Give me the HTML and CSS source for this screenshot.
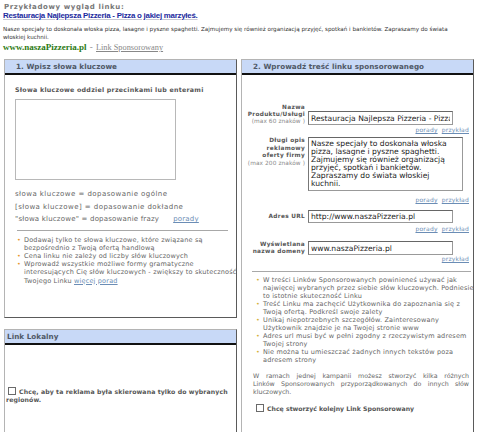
FILE: index.html
```html
<!DOCTYPE html>
<html lang="pl">
<head>
<meta charset="utf-8">
<title>Link Sponsorowany</title>
<link rel="stylesheet" href="styles.css">
</head>
<body>
<div class="sample">
  <div class="sample-label">Przykładowy wygląd linku:</div>
  <div class="sample-title">Restauracja Najlepsza Pizzeria - Pizza o jakiej marzyłeś.</div>
  <div class="sample-desc">Nasze specjały to doskonała włoska pizza, lasagne i pyszne spaghetti. Zajmujemy się również organizacją przyjęć, spotkań i bankietów. Zapraszamy do świata<br>włoskiej kuchnii.</div>
  <div class="sample-url"><b class="sample-domain">www.naszaPizzeria.pl</b> <span class="sample-dash">-</span> <a class="sample-sponsor" href="#">Link Sponsorowany</a></div>
</div>

<div class="panels">
  <div class="col-left">
    <div class="panel panel-keywords">
      <div class="panel-head">1. Wpisz słowa kluczowe</div>
      <div class="kw-body">
        <div class="kw-hint">Słowa kluczowe oddziel przecinkami lub enterami</div>
        <textarea class="kw-input"></textarea>
        <div class="kw-lines">
          <div>słowa kluczowe = dopasowanie ogólne</div>
          <div>[słowa kluczowe] = dopasowanie dokładne</div>
          <div class="kw-phrase">"słowa kluczowe" = dopasowanie frazy<a class="link kw-tip" href="#">porady</a></div>
        </div>
        <div class="rule kw-rule"></div>
        <ul class="tips kw-tips">
          <li><span>Dodawaj tylko te słowa kluczowe, które związane są<br>bezpośrednio z Twoją ofertą handlową</span></li>
          <li><span>Cena linku nie zależy od liczby słów kluczowych</span></li>
          <li><span>Wprowadź wszystkie możliwe formy gramatyczne<br>interesujących Cię słów kluczowych - zwiększy to skuteczność<br>Twojego Linku <a class="link" href="#">więcej porad</a></span></li>
        </ul>
      </div>
    </div>

    <div class="panel panel-local">
      <div class="panel-head head-local">Link Lokalny</div>
      <label class="local-check"><input type="checkbox" class="box box-local">Chcę, aby ta reklama była skierowana tylko do wybranych<br>regionów.</label>
    </div>
  </div>

  <div class="panel panel-ad">
    <div class="panel-head">2. Wprowadź treść linku sponsorowanego</div>

    <div class="frow frow-name">
      <div class="flabel"><b>Nazwa<br>Produktu/Usługi</b><br><span class="fmax">(max 60 znaków )</span></div>
      <input class="finput" type="text" value="Restauracja Najlepsza Pizzeria - Pizza o jakiej marzyłeś.">
    </div>
    <div class="flinks flinks-name"><a class="link" href="#">porady</a> <a class="link" href="#">przykład</a></div>

    <div class="frow frow-desc">
      <div class="flabel"><b>Długi opis<br>reklamowy<br>oferty firmy</b><br><span class="fmax">(max 200 znaków )</span></div>
      <textarea class="fdesc" wrap="off">Nasze specjały to doskonała włoska
pizza, lasagne i pyszne spaghetti.
Zajmujemy się również organizacją
przyjęć, spotkań i bankietów.
Zapraszamy do świata włoskiej
kuchnii.</textarea>
    </div>
    <div class="flinks flinks-desc"><a class="link" href="#">porady</a> <a class="link" href="#">przykład</a></div>

    <div class="frow frow-url">
      <div class="flabel"><b>Adres URL</b></div>
      <input class="finput finput-url" type="text" value="http://www.naszaPizzeria.pl">
    </div>
    <div class="flinks flinks-url"><a class="link" href="#">porady</a> <a class="link" href="#">przykład</a></div>

    <div class="frow frow-domain">
      <div class="flabel"><b>Wyświetlana<br>nazwa domeny</b></div>
      <input class="finput" type="text" value="www.naszaPizzeria.pl">
    </div>
    <div class="flinks"><a class="link" href="#">przykład</a></div>

    <div class="rule ad-rule"></div>
    <ul class="tips ad-tips">
      <li><span>W treści Linków Sponsorowanych powinieneś używać jak<br>najwięcej wybranych przez siebie słów kluczowych. Podniesie<br>to istotnie skuteczność Linku</span></li>
      <li><span>Treść Linku ma zachęcić Użytkownika do zapoznania się z<br>Twoją ofertą. Podkreśl swoje zalety</span></li>
      <li><span>Unikaj niepotrzebnych szczegółów. Zainteresowany<br>Użytkownik znajdzie je na Twojej stronie www</span></li>
      <li><span>Adres url musi być w pełni zgodny z rzeczywistym adresem<br>Twojej strony</span></li>
      <li><span>Nie można tu umieszczać żadnych innych tekstów poza<br>adresem strony</span></li>
    </ul>
    <p class="ad-note"><span class="jline">W ramach jednej kampanii możesz stworzyć kilka różnych</span><span class="jline">Linków Sponsorowanych przyporządkowanych do innych słów</span><span>kluczowych.</span></p>
    <label class="ad-check"><input type="checkbox" class="box">Chcę stworzyć kolejny Link Sponsorowany</label>
  </div>
</div>
</body>
</html>
```

FILE: styles.css
```css
html, body {
  margin: 0;
  padding: 0;
  background: #fff;
}
body {
  font-family: "DejaVu Sans", Verdana, sans-serif;
  color: #555;
  width: 480px;
  height: 435px;
  overflow: hidden;
}

/* ---------- sample link preview ---------- */
.sample {
  padding: 3px 0 0 3px;
  height: 59px;
  box-sizing: border-box;
}
.sample-label {
  font-weight: bold;
  font-size: 7px;
  letter-spacing: 0.6px;
  line-height: 8px;
  color: #777;
  padding-left: 1px;
}
.sample-title {
  font-family: "Liberation Sans", Arial, sans-serif;
  font-weight: bold;
  font-size: 7.9px;
  letter-spacing: -0.25px;
  line-height: 10px;
  color: #1c2a9e;
  text-decoration: underline;
  text-decoration-color: #c8c8d4;
}
.sample-desc {
  margin-top: 4px;
  font-size: 5.6px;
  line-height: 8px;
  color: #333;
  white-space: nowrap;
}
.sample-url {
  margin-top: 1px;
  font-family: "Liberation Serif", "Times New Roman", serif;
  font-size: 9px;
  line-height: 10px;
}
.sample-domain {
  color: #2b7a12;
}
.sample-dash {
  color: #888;
  padding: 0 1px;
}
.sample-sponsor {
  color: #888;
  font-size: 8.3px;
  text-decoration: underline;
}

/* ---------- panels ---------- */
.panels {
  display: grid;
  grid-template-columns: 233px 233px;
  column-gap: 4px;
  padding-left: 4px;
}
.col-left {
  display: flex;
  flex-direction: column;
  gap: 11px;
}
.panel {
  border: 1px solid;
  border-color: #b4b4b4 #5a5a5a #5a5a5a #b4b4b4;
  background: #fff;
  box-sizing: border-box;
}
.panel-head {
  height: 13px;
  background: #c8d9f7;
  border-bottom: 2px solid #111;
  padding-left: 11px;
  font-weight: bold;
  font-size: 7.2px;
  letter-spacing: 0.05px;
  line-height: 13px;
  color: #4f5866;
  white-space: nowrap;
}
.link {
  color: #6b8db5;
  text-decoration: underline;
}

/* panel 1 */
.panel-keywords {
  height: 259px;
}
.kw-body {
  padding-left: 10px;
}
.kw-hint {
  margin-top: 11px;
  font-weight: bold;
  font-size: 6.3px;
  letter-spacing: 0.25px;
  line-height: 8px;
  color: #555;
  white-space: nowrap;
}
.kw-input {
  display: block;
  margin: 5px 0 0 0;
  width: 161px;
  height: 81px;
  box-sizing: border-box;
  border: 1px solid #b8b8b8;
  padding: 0;
  resize: none;
  background: #fff;
}
.kw-lines {
  margin-top: 8px;
  font-size: 7px;
  letter-spacing: 0.45px;
  line-height: 12.5px;
  color: #666;
  white-space: nowrap;
}
.kw-phrase {
  letter-spacing: 0.2px;
}
.kw-tip {
  margin-left: 14px;
}
.rule {
  border-top: 1px solid #a8a8a8;
  height: 0;
}
.kw-rule {
  margin: 4px 8px 0 2px;
}
.tips {
  list-style: none;
  margin: 0;
  padding: 0;
  font-size: 6.5px;
  letter-spacing: 0.18px;
  color: #666;
  white-space: nowrap;
}
.tips li {
  display: flex;
}
.tips li::before {
  content: "•";
  flex: none;
  width: 7px;
  letter-spacing: 0;
  color: #e89a2a;
}
.kw-tips {
  margin: 5px 0 0 2px;
  line-height: 8.2px;
}

/* Link Lokalny */
.panel-local {
  height: 103px;
  border-bottom: none;
}
.head-local {
  padding-left: 2px;
}
.local-check {
  display: block;
  margin-top: 42px;
  padding-left: 1px;
  font-weight: bold;
  font-size: 6.2px;
  letter-spacing: 0.1px;
  line-height: 8px;
  color: #555;
  white-space: nowrap;
}
.box {
  appearance: none;
  -webkit-appearance: none;
  width: 8px;
  height: 8px;
  margin: 0 3px 0 2px;
  padding: 0;
  border: 1px solid #6a6a6a;
  background: #fff;
  box-sizing: border-box;
  vertical-align: -1px;
}

/* panel 2 */
.panel-ad {
  height: 373px;
  border-bottom: none;
}
.frow {
  display: grid;
  grid-template-columns: 63px auto;
  column-gap: 3px;
  align-items: end;
}
.frow-name {
  margin-top: 29px;
}
.flabel {
  text-align: right;
  font-size: 5.8px;
  letter-spacing: 0.3px;
  line-height: 7px;
  color: #555;
  white-space: nowrap;
}
.fmax {
  color: #8a8a8a;
  letter-spacing: 0.1px;
}
.finput {
  width: 145px;
  height: 14px;
  box-sizing: border-box;
  margin: 0;
  padding: 0 2px;
  border: 1px solid #999;
  border-top-color: #666;
  border-left-color: #777;
  font-family: "DejaVu Sans", Verdana, sans-serif;
  font-size: 7.6px;
  color: #222;
  background: #fff;
}
.flinks {
  text-align: right;
  padding-right: 4px;
  font-size: 6px;
  letter-spacing: 0.2px;
  line-height: 8px;
  word-spacing: 2px;
}
.flinks-name {
  margin-top: 1px;
}
.frow-desc {
  margin-top: 3px;
  align-items: start;
}
.frow-desc .flabel {
  line-height: 7.7px;
}
.fdesc {
  display: block;
  width: 155px;
  height: 54px;
  box-sizing: border-box;
  margin: 0;
  padding: 2px 2px 0 2px;
  border: 1px solid #999;
  border-top-color: #666;
  border-left-color: #777;
  font-family: "DejaVu Sans", Verdana, sans-serif;
  font-size: 7.6px;
  line-height: 8px;
  color: #222;
  resize: none;
  overflow: hidden;
  white-space: pre;
}
.flinks-desc {
  margin-top: 5px;
}
.frow-url {
  margin-top: 6px;
  align-items: center;
}
.finput-url {
  height: 13px;
}
.flinks-url {
  margin-top: 2px;
}
.frow-domain {
  margin-top: 8px;
}
.ad-rule {
  margin: 8px 2px 0 10px;
}
.ad-tips {
  margin: 4px 0 0 14px;
  line-height: 8px;
}
.ad-tips li::before {
  color: #d6b43a;
}
.ad-note {
  margin: 8px 4px 0 11px;
  font-size: 6.3px;
  line-height: 8px;
  color: #666;
}
.jline {
  display: block;
  text-align: justify;
  text-align-last: justify;
}
.ad-check {
  display: block;
  margin-top: 8px;
  padding-left: 12px;
  font-weight: bold;
  font-size: 6.2px;
  line-height: 8px;
  color: #555;
  white-space: nowrap;
}
.ad-check .box {
  margin: 0 3px 0 2px;
}
```
